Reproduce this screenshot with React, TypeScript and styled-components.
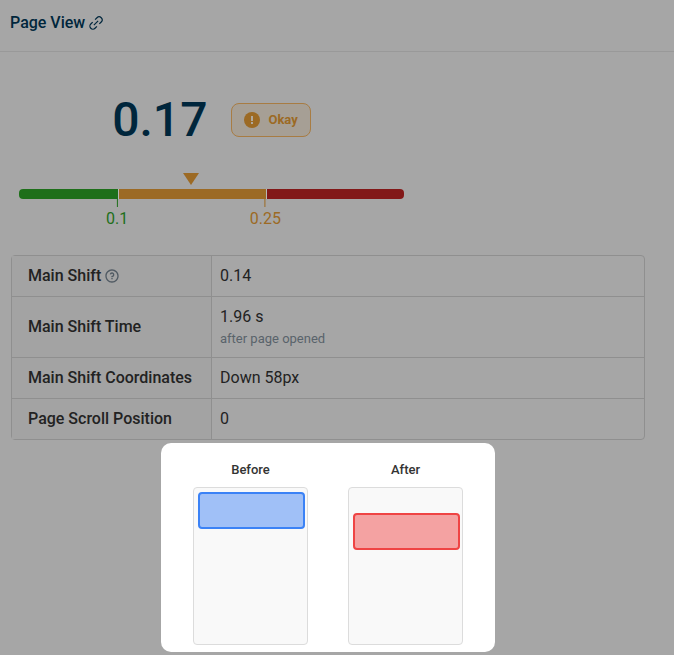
import React from "react";
import styled, { createGlobalStyle } from "styled-components";
import { RiQuestionLine } from "react-icons/ri";

const GlobalStyle = createGlobalStyle`
  *, *::before, *::after { box-sizing: border-box; }
  body {
    margin: 0;
    background: #a6a6a6;
    color: #222222;
    font-family: Roboto, "Liberation Sans", sans-serif;
    font-size: 16px;
    line-height: 24px;
  }
`;

const Header = styled.header`
  display: flex;
  align-items: center;
  gap: 3px;
  height: 52px;
  padding: 0 10px 6px;
  border-bottom: 1px solid #999999;
`;

const Title = styled.h1`
  margin: 0;
  color: #00263c;
  font-size: 16px;
  font-weight: 500;
`;

const IconLink = styled.a`
  display: flex;
  color: #00263c;
`;

const Content = styled.main`
  padding: 40px 29px 3px 11px;
`;

const Summary = styled.section`
  max-width: 393px;
  padding: 0 0 0 8px;
`;

const ScoreRow = styled.div`
  display: flex;
  align-items: center;
  justify-content: center;
  gap: 24px;
  height: 56px;
`;

const Score = styled.div`
  color: #00263c;
  font-size: 48px;
  line-height: 56px;
  font-weight: 500;
`;

const Badge = styled.div`
  display: flex;
  align-items: center;
  gap: 8px;
  height: 34px;
  padding: 0 12px;
  border: 1px solid #a87c43;
  border-radius: 8px;
  background: #a69f95;
  color: #9c6a24;
  font-size: 13px;
  font-weight: 700;
`;

const Scale = styled.div`
  margin-top: 25px;
`;

const PointerTrack = styled.div`
  display: flex;
  height: 16px;
`;

const Pointer = styled.svg`
  display: block;
  width: 16px;
  height: 12px;
`;

const Bar = styled.div`
  display: grid;
  grid-template-columns: 99fr 147fr 137fr;
  gap: 1px;
  height: 10px;
  border-radius: 4px;
  overflow: hidden;
  background: #b8b8b8;
`;

const Segment = styled.div<{ $color: string }>`
  background: ${(p) => p.$color};
`;

const Ticks = styled.div`
  position: relative;
  height: 56px;
`;

const Tick = styled.div<{ $at: number; $color: string }>`
  position: absolute;
  left: ${(p) => p.$at}%;
  display: flex;
  flex-direction: column;
  align-items: center;
  transform: translateX(-50%);
  color: ${(p) => p.$color};

  &::before {
    content: "";
    width: 1px;
    height: 8px;
    background: currentColor;
  }
`;

const Facts = styled.table`
  width: 100%;
  table-layout: fixed;
  border-collapse: separate;
  border-spacing: 0;
  border: 1px solid #8f8f8f;
  border-radius: 4px;

  tr + tr > * {
    border-top: 1px solid #8f8f8f;
  }
`;

const Name = styled.th`
  width: 200px;
  padding: 8px 8px 8px 16px;
  border-right: 1px solid #8f8f8f;
  background: #a3a3a3;
  text-align: left;
  font-weight: 500;
`;

const NameInner = styled.span`
  display: flex;
  align-items: center;
  gap: 3px;
`;

const HelpButton = styled.button`
  display: flex;
  padding: 0;
  border: 0;
  background: none;
  color: #505a63;
  font-size: 16px;
`;

const Value = styled.td`
  padding: 8px;
`;

const Note = styled.div`
  color: #59636b;
  font-size: 13px;
  line-height: 20px;
`;

const Comparison = styled.section`
  display: flex;
  justify-content: center;
  gap: 40px;
  width: 334px;
  max-width: 100%;
  margin: 3px auto 0;
  padding: 17px 24px 7px;
  border-radius: 10px;
  background: #ffffff;
`;

const Shot = styled.figure`
  display: flex;
  flex-direction: column;
  gap: 7px;
  width: 115px;
  margin: 0;
`;

const Caption = styled.figcaption`
  color: #333333;
  font-size: 13px;
  line-height: 20px;
  font-weight: 500;
  text-align: center;
`;

const Frame = styled.div<{ $shift: number }>`
  height: 158px;
  padding: ${(p) => p.$shift + 4}px 2px 0 4px;
  border: 1px solid #dcdcdc;
  border-radius: 4px;
  background: #f9f9f9;
`;

const Block = styled.div<{ $tone: "blue" | "red" }>`
  height: 37px;
  border: 2px solid ${(p) => (p.$tone === "blue" ? "#3b82f6" : "#ef4444")};
  border-radius: 4px;
  background: ${(p) => (p.$tone === "blue" ? "#a0c0f7" : "#f4a2a2")};
`;

const GREEN = "#1e6f1a";
const AMBER = "#9c6a24";
const RED = "#821818";

const facts = [
  { name: "Main Shift", value: "0.14", help: true },
  { name: "Main Shift Time", value: "1.96 s", note: "after page opened" },
  { name: "Main Shift Coordinates", value: "Down 58px" },
  { name: "Page Scroll Position", value: "0" },
];

export default function App() {
  return (
    <>
      <GlobalStyle />
      <Header>
        <Title>Page View</Title>
        <IconLink href="#page-view" aria-label="Link to page view">
          <svg
            width="16"
            height="16"
            viewBox="0 0 16 16"
            fill="none"
            stroke="currentColor"
            strokeWidth="1.2"
            aria-hidden="true"
          >
            <g transform="rotate(-45 8 8)">
              <path d="M6.3 11H3.6a3 3 0 0 1 0-6h2.7M9.7 5h2.7a3 3 0 0 1 0 6H9.7M5 8h6" />
            </g>
          </svg>
        </IconLink>
      </Header>
      <Content>
        <Summary>
          <ScoreRow>
            <Score>0.17</Score>
            <Badge>
              <svg width="16" height="16" viewBox="0 0 16 16" aria-hidden="true">
                <circle cx="8" cy="8" r="8" fill={AMBER} />
                <path d="M7 4h2v5H7zM7 10h2v2H7z" fill="#b0a99d" />
              </svg>
              Okay
            </Badge>
          </ScoreRow>
          <Scale>
            <PointerTrack style={{ paddingLeft: "calc(44.7% - 8px)" }}>
              <Pointer viewBox="0 0 16 12" aria-hidden="true">
                <path d="M0 0h16L8 12z" fill={AMBER} />
              </Pointer>
            </PointerTrack>
            <Bar>
              <Segment $color={GREEN} />
              <Segment $color={AMBER} />
              <Segment $color={RED} />
            </Bar>
            <Ticks>
              <Tick $at={25.5} $color={GREEN}>0.1</Tick>
              <Tick $at={64} $color={AMBER}>0.25</Tick>
            </Ticks>
          </Scale>
        </Summary>
        <Facts>
          <tbody>
            {facts.map((fact) => (
              <tr key={fact.name}>
                <Name scope="row">
                  <NameInner>
                    {fact.name}
                    {fact.help && (
                      <HelpButton type="button" aria-label="About main shift">
                        <RiQuestionLine />
                      </HelpButton>
                    )}
                  </NameInner>
                </Name>
                <Value>
                  {fact.value}
                  {fact.note && <Note>{fact.note}</Note>}
                </Value>
              </tr>
            ))}
          </tbody>
        </Facts>
        <Comparison>
          <Shot>
            <Caption>Before</Caption>
            <Frame $shift={0}>
              <Block $tone="blue" />
            </Frame>
          </Shot>
          <Shot>
            <Caption>After</Caption>
            <Frame $shift={21}>
              <Block $tone="red" />
            </Frame>
          </Shot>
        </Comparison>
      </Content>
    </>
  );
}
